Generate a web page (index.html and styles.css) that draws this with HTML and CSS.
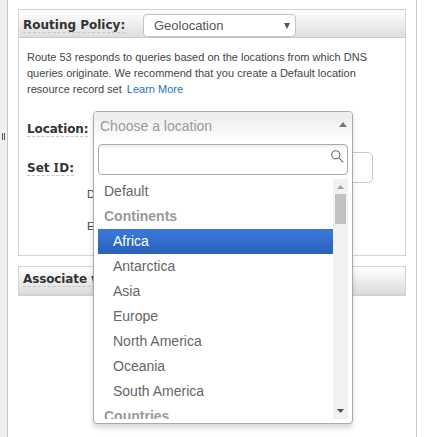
FILE: index.html
```html
<!DOCTYPE html>
<html lang="en">
<head>
<meta charset="utf-8">
<title>Routing Policy</title>
<link rel="stylesheet" href="styles.css">
</head>
<body>
<div class="splitter"><span class="grip"></span></div>
<main class="pane">
  <section class="panel">
    <header class="panel-head">
      <span class="label">Routing Policy:</span>
      <div class="select"><span>Geolocation</span><svg width="6" height="6" viewBox="0 0 6 6"><path d="M0 0h6L3 6z"/></svg></div>
    </header>
    <div class="panel-body">
      <p class="help">Route 53 responds to queries based on the locations from which DNS queries originate. We recommend that you create a Default location resource record set <a class="link">Learn More</a></p>
      <div class="row row-location">
        <span class="label tight">Location:</span>
        <div class="chosen">
          <div class="chosen-head"><span>Choose a location</span><svg width="8" height="5" viewBox="0 0 8 5"><path d="M4 0l4 5H0z"/></svg></div>
          <div class="search"><svg width="13" height="13" viewBox="0 0 13 13"><circle cx="4.8" cy="4.8" r="4.1"/><path d="M7.8 7.8l4.5 4.5"/></svg></div>
          <div class="list">
            <ul class="options">
              <li>Default</li>
              <li class="group">Continents</li>
              <li class="sub active">Africa</li>
              <li class="sub">Antarctica</li>
              <li class="sub">Asia</li>
              <li class="sub">Europe</li>
              <li class="sub">North America</li>
              <li class="sub">Oceania</li>
              <li class="sub">South America</li>
              <li class="group">Countries</li>
            </ul>
            <div class="scrollbar">
              <svg class="up" width="7" height="4" viewBox="0 0 7 4"><path d="M3.5 0L7 4H0z"/></svg>
              <span class="thumb"></span>
              <svg class="down" width="7" height="4" viewBox="0 0 7 4"><path d="M0 0h7L3.5 4z"/></svg>
            </div>
          </div>
        </div>
      </div>
      <div class="row row-id">
        <span class="label">Set <span class="serif-i">I</span>D:</span>
        <div class="input"></div>
      </div>
      <p class="note">D</p>
      <p class="note">E</p>
    </div>
  </section>
  <section class="associate"><span class="label tight">Associate with</span></section>
</main>
</body>
</html>
```
FILE: styles.css
```css
* { box-sizing: border-box; }
body {
  margin: 0;
  height: 437px;
  overflow: hidden;
  display: flex;
  background: #fff;
  color: #444;
  font: 11px/16px "Liberation Sans", Arial, sans-serif;
}
p, ul { margin: 0; padding: 0; }
svg { display: block; }
.splitter {
  width: 8px;
  background: #efefef;
  border-right: 1px solid #c6c6c6;
  padding: 133px 0 0 2px;
}
.grip {
  display: block;
  width: 3px;
  height: 7px;
  border: solid #555;
  border-width: 0 1px;
}
.pane {
  width: 409px;
  border-right: 1px solid #c6c6c6;
  padding: 9px 10px 0;
}
.panel {
  height: 247px;
  border: 1px solid #d3d3d3;
}
.panel-head {
  height: 28px;
  padding: 4px 0 0 4px;
  display: flex;
  align-items: flex-start;
  border-bottom: 1px solid #c9c9c9;
  background: linear-gradient(#fff, #dedede);
}
.label {
  font: bold 12px/14px "DejaVu Sans", Verdana, sans-serif;
  color: #333;
  height: 19px;
  padding-top: 4px;
  border-bottom: 1px dashed #c6c6c6;
  white-space: nowrap;
}
.tight { letter-spacing: -.12px; }
.serif-i { font-family: "Noto Sans", "Open Sans", sans-serif; font-size: 12.5px; line-height: 1; letter-spacing: .7px; }
.select {
  width: 153px;
  height: 23px;
  margin-left: auto;
  margin-right: 109px;
  padding: 0 5px 0 10px;
  display: flex;
  align-items: center;
  justify-content: space-between;
  background: #fff;
  border: 1px solid #c4c4c4;
  border-radius: 4px;
  font-size: 13px;
  color: #555;
  fill: #555;
}
.panel-body { padding: 11px 8px 0; }
.help { width: 350px; }
.link { color: #1b75bc; margin-left: 2px; }
.row {
  display: flex;
  align-items: flex-start;
  position: relative;
}
.row-location { padding-top: 21px; height: 55px; }
.row-id { padding-top: 5px; height: 34px; }
.input {
  width: 280px;
  height: 31px;
  margin: -5px 0 0 auto;
  margin-right: 24px;
  border: 1px solid #c9c9c9;
  border-radius: 5px;
}
.note { padding-left: 60px; height: 32px; }
.associate {
  height: 30px;
  margin-top: 10px;
  padding: 1px 4px;
  display: flex;
  border: 1px solid #d3d3d3;
  border-bottom: 2px solid #d3d3d3;
  background: linear-gradient(#fff, #dcdcdc);
}
.chosen {
  position: absolute;
  z-index: 2;
  left: 66px;
  top: 14px;
  width: 260px;
  height: 313px;
  padding: 0 4px 4px;
  background: #fff;
  border: 1px solid #aaa;
  border-radius: 4px;
  box-shadow: 0 4px 5px rgba(0, 0, 0, .15);
  font-size: 14px;
  color: #666;
}
.chosen-head {
  height: 32px;
  margin: 0 -4px;
  padding: 0 5px 4px 6px;
  display: flex;
  align-items: center;
  justify-content: space-between;
  border-radius: 3px 3px 0 0;
  background: linear-gradient(#eee 15%, #fff 90%);
  color: #999;
  fill: #777;
}
.chosen-head svg { margin-top: -3px; }
.search {
  height: 31px;
  display: flex;
  justify-content: flex-end;
  padding: 5px 3px 0 0;
  border: 1px solid #aaa;
  border-radius: 4px;
  background: linear-gradient(#eee 1%, #fff 15%);
}
.search svg { fill: none; stroke: #666; stroke-width: 1.1; }
.list {
  display: flex;
  height: 240px;
  margin-top: 4px;
  overflow: hidden;
}
.options { flex: 1; list-style: none; }
.options li { height: 25px; line-height: 24px; padding-left: 6px; }
.options .sub { padding-left: 15px; }
.options .group { font-weight: bold; color: #999; }
.options .active {
  color: #fff;
  background: linear-gradient(#3875d7 20%, #2a62bc 90%);
}
.scrollbar {
  width: 15px;
  background: #f1f1f1;
  display: flex;
  flex-direction: column;
  align-items: center;
  padding: 6px 0;
}
.thumb { width: 11px; height: 30px; margin-top: 5px; background: #c1c1c1; }
.up { fill: #a0a0a0; }
.down { fill: #505050; margin-top: auto; }
```
